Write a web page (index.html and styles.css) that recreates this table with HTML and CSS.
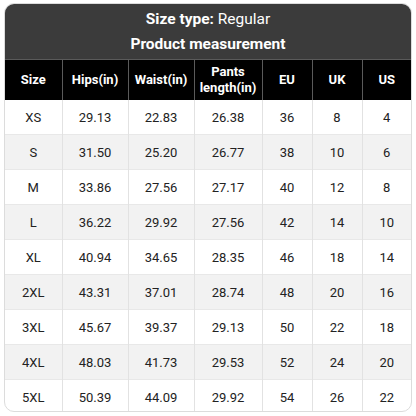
FILE: index.html
```html
<!DOCTYPE html>
<html>
<head>
<meta charset="utf-8">
<link rel="stylesheet" href="styles.css">
</head>
<body>
<div class="card">
  <div class="title">
    <div class="line"><b>Size type:</b> Regular</div>
    <div class="line"><b>Product measurement</b></div>
  </div>
  <table class="chart">
    <colgroup>
      <col class="c1"><col class="c2"><col class="c3"><col class="c4"><col class="c5"><col class="c6"><col class="c7">
    </colgroup>
    <thead>
      <tr><th>Size</th><th>Hips(in)</th><th>Waist(in)</th><th>Pants<br>length(in)</th><th>EU</th><th>UK</th><th>US</th></tr>
    </thead>
    <tbody>
      <tr><td>XS</td><td>29.13</td><td>22.83</td><td>26.38</td><td>36</td><td>8</td><td>4</td></tr>
      <tr><td>S</td><td>31.50</td><td>25.20</td><td>26.77</td><td>38</td><td>10</td><td>6</td></tr>
      <tr><td>M</td><td>33.86</td><td>27.56</td><td>27.17</td><td>40</td><td>12</td><td>8</td></tr>
      <tr><td>L</td><td>36.22</td><td>29.92</td><td>27.56</td><td>42</td><td>14</td><td>10</td></tr>
      <tr><td>XL</td><td>40.94</td><td>34.65</td><td>28.35</td><td>46</td><td>18</td><td>14</td></tr>
      <tr><td>2XL</td><td>43.31</td><td>37.01</td><td>28.74</td><td>48</td><td>20</td><td>16</td></tr>
      <tr><td>3XL</td><td>45.67</td><td>39.37</td><td>29.13</td><td>50</td><td>22</td><td>18</td></tr>
      <tr><td>4XL</td><td>48.03</td><td>41.73</td><td>29.53</td><td>52</td><td>24</td><td>20</td></tr>
      <tr><td>5XL</td><td>50.39</td><td>44.09</td><td>29.92</td><td>54</td><td>26</td><td>22</td></tr>
    </tbody>
  </table>
</div>
</body>
</html>
```
FILE: styles.css
```css
html, body {
  margin: 0;
  padding: 0;
  background: #ffffff;
}
body {
  padding: 3px 4px;
  font-family: Roboto, "Liberation Sans", sans-serif;
}
.card {
  width: 408px;
  height: 409px;
  box-sizing: border-box;
  border: 1px solid #dcdcdc;
  border-radius: 10px;
  overflow: hidden;
  background: #fff;
}
.title {
  background: #3b3b3b;
  color: #fff;
  font-size: 15.5px;
  text-align: center;
  height: 55px;
  padding-top: 3px;
  box-sizing: border-box;
}
.title .line {
  line-height: 25px;
}
.title b {
  font-weight: 700;
}
.chart {
  width: 100%;
  border-collapse: collapse;
  table-layout: fixed;
}
.c1 { width: 57px; }
.c2 { width: 66px; }
.c3 { width: 66px; }
.c4 { width: 68px; }
.c5 { width: 50px; }
.c6 { width: 50px; }
.c7 { width: 49px; }
.chart th {
  background: #000;
  color: #fff;
  font-size: 13px;
  font-weight: 700;
  line-height: 16px;
  height: 40px;
  padding: 0;
  border-left: 1px solid #5a5a5a;
  border-top: 1px solid #5a5a5a;
}
.chart th:first-child,
.chart td:first-child {
  border-left: none;
}
.chart td {
  height: 34px;
  padding: 0;
  text-align: center;
  font-size: 13px;
  color: #222;
  border-left: 1px solid #e2e2e2;
  border-top: 1px solid #e8e8e8;
}
.chart tbody tr:first-child td {
  border-top: none;
}
.chart tbody tr:nth-child(even) td {
  background: #f2f2f2;
}
```
